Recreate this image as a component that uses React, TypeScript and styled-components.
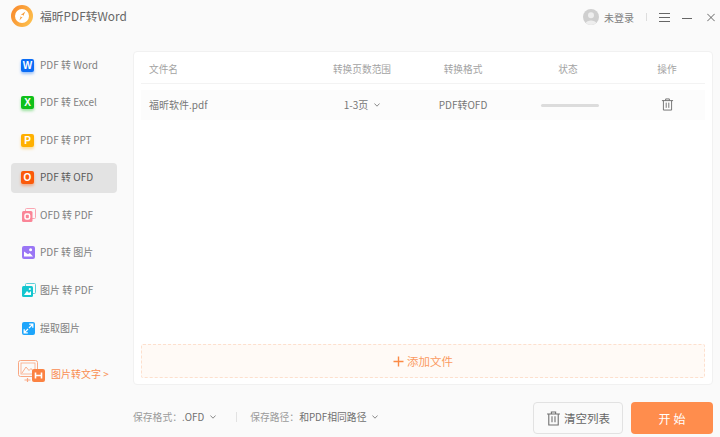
import React from 'react';
import styled, { createGlobalStyle } from 'styled-components';

const GlobalStyle = createGlobalStyle`
  html, body { margin: 0; padding: 0; }
  body { font-family: "Noto Sans CJK SC", "Noto Sans", sans-serif; overflow: hidden; }
  * { box-sizing: border-box; }
`;

const Window = styled.div`
  width: 720px;
  height: 437px;
  background: #fafafa;
  display: flex;
  flex-direction: column;
`;

const TitleBar = styled.header`
  height: 51px;
  flex: none;
  display: flex;
  align-items: flex-start;
  padding: 5px 5px 0 11px;
`;

const AppName = styled.div`
  margin-left: 7px;
  line-height: 22px;
  font-size: 11.8px;
  color: #666;
`;

const UserArea = styled.div`
  margin-left: auto;
  display: flex;
  align-items: center;
  height: 24px;
`;

const UserName = styled.span`
  margin-left: 5px;
  font-size: 10px;
  color: #808080;
`;

const Divider = styled.i`
  width: 1px;
  height: 8px;
  background: #ddd;
  margin: 0 12px 0 12px;
`;

const WindowIcon = styled.svg<{ $gap?: number }>`
  display: block;
  margin-left: ${p => p.$gap ?? 0}px;
`;

const Body = styled.div`
  flex: 1;
  display: flex;
  min-height: 0;
`;

const Sidebar = styled.nav`
  width: 133px;
  flex: none;
  display: flex;
  flex-direction: column;
  margin-top: -1px;
  padding: 0 16px 0 11px;
`;

const NavItem = styled.div<{ $active?: boolean }>`
  height: 30px;
  margin-bottom: 7.6px;
  display: flex;
  align-items: center;
  padding-left: 10px;
  border-radius: 4px;
  font-size: 10px;
  white-space: nowrap;
  color: ${p => (p.$active ? '#5a5a5a' : '#808080')};
  background: ${p => (p.$active ? '#e3e3e3' : 'transparent')};
`;

const NavLabel = styled.span`
  margin-bottom: 2px;
`;

const NavBadge = styled.span<{ $color: string }>`
  width: 13px;
  height: 13px;
  flex: none;
  margin-right: 6px;
  border-radius: 2px;
  background: ${p => p.$color};
  box-shadow: 0 2px 3px ${p => p.$color}66;
  color: #fff;
  font-size: 10px;
  font-weight: 700;
  line-height: 13px;
  text-align: center;
  font-family: "Liberation Sans", sans-serif;
`;

const NavGlyph = styled.svg`
  width: 15px;
  height: 15px;
  flex: none;
  margin: 0 4px 0 0;
  display: block;
`;

const Promo = styled.div`
  display: flex;
  align-items: flex-start;
  margin: 9px 0 0 7px;
  height: 26px;
  font-size: 10px;
  color: #f98d52;
  white-space: nowrap;
`;

const PromoText = styled.span`
  margin-left: 6px;
  line-height: 14px;
  padding-top: 7px;
`;

const Main = styled.main`
  flex: 1;
  min-width: 0;
  display: flex;
  flex-direction: column;
  padding-right: 7px;
`;

const Panel = styled.section`
  height: 334px;
  flex: none;
  background: #fff;
  border: 1px solid #f1f1f1;
  border-radius: 4px;
  padding: 0 7px 6px;
  display: flex;
  flex-direction: column;
`;

const columns = '164px 114px 88px 122px 76px';

const HeadRow = styled.div`
  height: 32px;
  flex: none;
  padding-top: 2px;
  display: grid;
  grid-template-columns: ${columns};
  align-items: center;
  border-bottom: 1px solid #f3f3f3;
  font-size: 9.7px;
  color: #a3a3a3;
`;

const FileRow = styled.div`
  height: 30px;
  flex: none;
  margin-top: 6px;
  padding-bottom: 1px;
  display: grid;
  grid-template-columns: ${columns};
  align-items: center;
  background: #fcfcfc;
  font-size: 10px;
  color: #777;
`;

const Cell = styled.div<{ $left?: boolean }>`
  display: flex;
  align-items: center;
  justify-content: ${p => (p.$left ? 'flex-start' : 'center')};
  padding-left: ${p => (p.$left ? '8px' : '0')};
  white-space: nowrap;
`;

const Progress = styled.div`
  width: 58px;
  height: 3px;
  margin: 1px 0 0 4px;
  border-radius: 2px;
  background: #dcdcdc;
`;

const Spacer = styled.div`
  flex: 1;
`;

const DropZone = styled.div`
  height: 34px;
  flex: none;
  display: flex;
  align-items: center;
  justify-content: center;
  background: #fffaf6;
  border: 1px dashed #fde0ce;
  border-radius: 2px;
  color: #fb9a62;
  font-size: 11.5px;
`;

const PlusIcon = styled.svg`
  display: block;
  margin-right: 3px;
`;

const Footer = styled.footer`
  flex: 1;
  display: flex;
  align-items: flex-start;
  padding-top: 17px;
  font-size: 9.8px;
  color: #8a8a8a;
`;

const Select = styled.div`
  height: 30px;
  display: flex;
  align-items: center;
  white-space: nowrap;
  color: #9a9a9a;
`;

const SelectValue = styled.span`
  color: #707070;
`;

const Chevron = styled.svg`
  display: block;
  margin-left: 6px;
`;

const FooterDivider = styled.i`
  width: 1px;
  height: 10px;
  background: #e2e2e2;
  margin: 10px 13px 0 20px;
`;

const ClearButton = styled.button`
  margin-left: auto;
  width: 90px;
  height: 32px;
  display: flex;
  align-items: center;
  justify-content: center;
  background: #fafafa;
  border: 1px solid #e2e2e2;
  border-radius: 4px;
  font: inherit;
  font-size: 11.5px;
  color: #666;
  padding: 0;
`;

const ClearIcon = styled.span`
  display: flex;
  margin-right: 3px;
`;

const StartButton = styled.button`
  margin-left: 8px;
  width: 82px;
  height: 32px;
  background: #ff8d4d;
  border: none;
  border-radius: 4px;
  font: inherit;
  font-size: 12px;
  letter-spacing: 3px;
  color: #fff;
  padding: 0 0 0 3px;
`;

const Logo = () => (
  <svg width="22" height="22" viewBox="0 0 22 22">
    <defs>
      <linearGradient id="lg" x1="0" y1="0.2" x2="1" y2="0.8">
        <stop offset="0" stopColor="#f98a2c" />
        <stop offset="1" stopColor="#fdc24f" />
      </linearGradient>
    </defs>
    <circle cx="11" cy="11" r="11" fill="url(#lg)" />
    <circle cx="11" cy="11" r="7" fill="#fff" />
    <path d="M14.4 6.6 L11.8 11.8 L8.4 15.6 L10.4 9.6 Z" fill="#f89a34" />
    <circle cx="11" cy="11" r="1.2" fill="#fff" />
  </svg>
);

const Avatar = () => (
  <svg width="16" height="16" viewBox="0 0 16 16">
    <circle cx="8" cy="8" r="8" fill="#cfcfcf" />
    <circle cx="8" cy="6.2" r="3" fill="#eee" />
    <path d="M2.8 14 C3.4 10.6 12.6 10.6 13.2 14 A8 8 0 0 1 2.8 14 Z" fill="#eee" />
  </svg>
);

const TrashIcon = ({ size = 14 }: { size?: number }) => (
  <svg width={size} height={size} viewBox="0 0 14 14" fill="none" stroke="#6e6e6e" strokeWidth="1">
    <path d="M1 2.8 H13 M5 2.8 V1 H9 V2.8 M2.6 2.8 V13 H11.4 V2.8 M5.6 5 V10.6 M8.4 5 V10.6" />
  </svg>
);

const ChevronDown = () => (
  <Chevron width="6" height="4" viewBox="0 0 6 4" fill="none" stroke="#888" strokeWidth="1">
    <path d="M0.4 0.5 L3 3.2 L5.6 0.5" />
  </Chevron>
);

const OfdToPdfIcon = () => (
  <NavGlyph viewBox="0 0 15 15">
    <rect x="4.5" y="0.5" width="10" height="10" rx="1" fill="none" stroke="#fba6b2" />
    <rect x="1" y="3" width="10.5" height="11" rx="1.5" fill="#fa8597" />
    <rect x="4" y="6" width="4.6" height="5" rx="1.5" fill="none" stroke="#fff" strokeWidth="1.5" />
  </NavGlyph>
);

const PdfToImageIcon = () => (
  <NavGlyph viewBox="0 0 15 15">
    <rect x="1" y="1" width="13" height="13" rx="2" fill="#9a76f5" />
    <circle cx="9.6" cy="4.8" r="1.5" fill="#fff" />
    <path d="M3 11.5 V6.5 L7 9.2 L8.8 8 L12 11.5 Z" fill="#fff" />
  </NavGlyph>
);

const ImageToPdfIcon = () => (
  <NavGlyph viewBox="0 0 15 15">
    <rect x="4.5" y="0.5" width="10" height="10" rx="1" fill="none" stroke="#5ccfd8" />
    <rect x="1" y="3" width="11" height="11" rx="1.5" fill="#14c6cf" />
    <path d="M3 12 L6 8 L8 10 L10 8 V12 Z" fill="#fff" />
    <circle cx="8.8" cy="6" r="1.1" fill="#fff" />
  </NavGlyph>
);

const ExtractIcon = () => (
  <NavGlyph viewBox="0 0 15 15">
    <rect x="1" y="1" width="13" height="13" rx="2" fill="#1da5fb" />
    <path d="M3.4 11.6 L7 8 M3.2 8.2 V11.8 H6.8 M8 7 L11.6 3.4 M8.2 3.2 H11.8 V6.8" stroke="#fff" strokeWidth="1.3" fill="none" />
  </NavGlyph>
);

const PromoIcon = () => (
  <svg width="27" height="24" viewBox="0 0 27 24" fill="none">
    <rect x="0.5" y="0.5" width="19" height="16" rx="2" stroke="#f9a782" strokeWidth="1" />
    <rect x="3" y="3" width="14" height="11" stroke="#f9a782" strokeWidth="0.8" />
    <path d="M4 13 L8 7 L11 10.5 L13 8.5 L16 12" stroke="#f9a782" strokeWidth="0.9" />
    <path d="M6.5 20 H12.5 M9.5 18 V22" stroke="#f9a782" strokeWidth="1.2" />
    <rect x="14" y="9" width="13" height="13" rx="2" fill="#fb8242" />
    <path d="M17.5 12.5 V18.5 M23.5 12.5 V18.5 M17.5 15.5 H23.5" stroke="#fff" strokeWidth="1.6" />
  </svg>
);

const navItems = [
  { label: 'PDF 转 Word', letter: 'W', color: '#0a6cf5' },
  { label: 'PDF 转 Excel', letter: 'X', color: '#0fc01a' },
  { label: 'PDF 转 PPT', letter: 'P', color: '#ffb000' },
  { label: 'PDF 转 OFD', letter: 'O', color: '#fb5a0a', active: true },
  { label: 'OFD 转 PDF', glyph: <OfdToPdfIcon /> },
  { label: 'PDF 转 图片', glyph: <PdfToImageIcon /> },
  { label: '图片 转 PDF', glyph: <ImageToPdfIcon /> },
  { label: '提取图片', glyph: <ExtractIcon /> },
];

export default function App() {
  return (
    <Window>
      <GlobalStyle />
      <TitleBar>
        <Logo />
        <AppName>福昕PDF转Word</AppName>
        <UserArea>
          <Avatar />
          <UserName>未登录</UserName>
          <Divider />
          <WindowIcon width="11" height="9" viewBox="0 0 11 9" stroke="#666" strokeWidth="1">
            <path d="M0 0.5 H11 M0 4.5 H11 M0 8.5 H11" />
          </WindowIcon>
          <WindowIcon $gap={12} width="10" height="9" viewBox="0 0 10 9" stroke="#666" strokeWidth="1">
            <path d="M0 5.5 H10" />
          </WindowIcon>
          <WindowIcon $gap={15} width="8" height="9" viewBox="0 0 8 9" stroke="#666" strokeWidth="1">
            <path d="M0.3 0.8 L7.7 8.2 M7.7 0.8 L0.3 8.2" />
          </WindowIcon>
        </UserArea>
      </TitleBar>
      <Body>
        <Sidebar>
          {navItems.map(item => (
            <NavItem key={item.label} $active={item.active}>
              {item.glyph ?? <NavBadge $color={item.color!}>{item.letter}</NavBadge>}
              <NavLabel>{item.label}</NavLabel>
            </NavItem>
          ))}
          <Promo>
            <PromoIcon />
            <PromoText>图片转文字 &gt;</PromoText>
          </Promo>
        </Sidebar>
        <Main>
          <Panel>
            <HeadRow>
              <Cell $left>文件名</Cell>
              <Cell>转换页数范围</Cell>
              <Cell>转换格式</Cell>
              <Cell>状态</Cell>
              <Cell>操作</Cell>
            </HeadRow>
            <FileRow>
              <Cell $left>福昕软件.pdf</Cell>
              <Cell>
                1-3页
                <ChevronDown />
              </Cell>
              <Cell>PDF转OFD</Cell>
              <Cell>
                <Progress />
              </Cell>
              <Cell>
                <TrashIcon size={13} />
              </Cell>
            </FileRow>
            <Spacer />
            <DropZone>
              <PlusIcon width="11" height="11" viewBox="0 0 11 11" stroke="#fb8a45" strokeWidth="1.4">
                <path d="M5.5 0.5 V10.5 M0.5 5.5 H10.5" />
              </PlusIcon>
              添加文件
            </DropZone>
          </Panel>
          <Footer>
            <Select>
              保存格式：<SelectValue>.OFD</SelectValue>
              <ChevronDown />
            </Select>
            <FooterDivider />
            <Select>
              保存路径：<SelectValue>和PDF相同路径</SelectValue>
              <ChevronDown />
            </Select>
            <ClearButton>
              <ClearIcon>
                <TrashIcon size={15} />
              </ClearIcon>
              清空列表
            </ClearButton>
            <StartButton>开始</StartButton>
          </Footer>
        </Main>
      </Body>
    </Window>
  );
}
